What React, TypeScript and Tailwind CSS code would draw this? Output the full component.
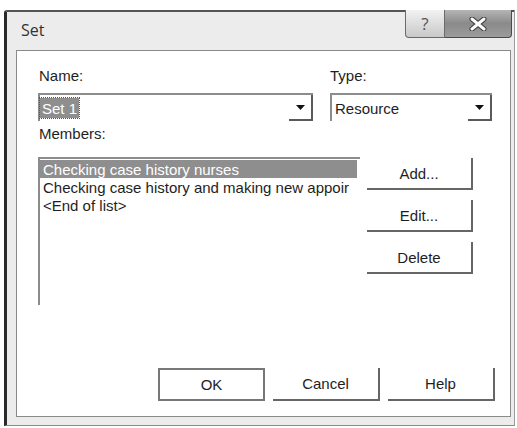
import React from "react";

function Arrow() {
  return (
    <svg width="9" height="5" viewBox="0 0 9 5" className="block">
      <path d="M0 0 H9 L4.5 5 Z" fill="#111" />
    </svg>
  );
}

function Combo({ width, children }: { width: string; children: React.ReactNode }) {
  return (
    <div className={`${width} h-[28px] flex border-t-2 border-l-2 border-[#8c8c8c] bg-white`}>
      <div className="flex-1 flex items-center">{children}</div>
      <div className="w-[24px] flex items-center justify-center border-r-2 border-b-2 border-[#5a5a5a]">
        <Arrow />
      </div>
    </div>
  );
}

function SideButton({ label }: { label: string }) {
  return (
    <div className="w-[106px] h-[32px] flex items-center justify-center border-r-2 border-b-2 border-[#666] bg-white text-[15px] text-[#1e1e1e]">
      {label}
    </div>
  );
}

export default function App() {
  return (
    <div className="w-[517px] h-[428px] bg-white overflow-hidden font-['Liberation_Sans',Arial,sans-serif]">
      <div className="ml-[4px] mt-[10px] w-[511px] h-[416px] flex flex-col bg-[#ececec] border-l-[3px] border-l-[#2a2a2a] border-t-2 border-t-[#555] border-r border-r-[#9a9a9a] border-b border-b-[#8a8a8a] rounded-tl-[3px]">
        {/* title bar */}
        <div className="h-[38px] flex items-start">
          <span className="ml-[14px] mt-[7px] text-[16px] leading-[22px] text-[#333] font-['Open_Sans',sans-serif]">
            Set
          </span>
          <div className="ml-auto mr-[2px] -mt-[2px] flex">
            <div className="w-[40px] h-[28px] flex items-center justify-center border border-t-0 border-[#6a6a6a] rounded-bl-[4px] bg-gradient-to-b from-[#f2f2f2] to-[#c9c9c9] text-[17px] leading-none text-[#555] font-['Open_Sans',sans-serif]">
              ?
            </div>
            <div className="w-[67px] h-[28px] flex items-center justify-center border border-t-0 border-l-0 border-[#4a4a4a] rounded-br-[4px] bg-gradient-to-b from-[#b5b5b5] via-[#8a8a8a] to-[#9c9c9c]">
              <svg width="20" height="14" viewBox="0 0 20 14">
                <path d="M4 2 L16 12 M16 2 L4 12" stroke="#3a3a3a" strokeWidth="5" strokeLinecap="round" />
                <path d="M4 2 L16 12 M16 2 L4 12" stroke="#fafafa" strokeWidth="3" strokeLinecap="round" />
              </svg>
            </div>
          </div>
        </div>

        {/* dialog body */}
        <div className="ml-[9px] mr-[3px] mb-[8px] flex-1 flex flex-col border border-[#8a8a8a] bg-white pl-[21px] pt-[16px] pb-[15px] pr-[15px] text-[15px] leading-[17px] text-[#1e1e1e]">
          <div className="flex">
            <span className="w-[292px] pl-[1px]">Name:</span>
            <span>Type:</span>
          </div>
          <div className="mt-[9px] flex gap-[17px]">
            <Combo width="w-[275px]">
              <span className="h-[20px] px-[2px] flex items-center bg-[#8e8e8e] text-white outline outline-1 outline-dotted outline-[#555]">
                Set 1
              </span>
            </Combo>
            <Combo width="w-[162px]">
              <span className="pl-[3px]">Resource</span>
            </Combo>
          </div>
          <div className="mt-[4px] pl-[1px]">Members:</div>
          <div className="mt-[15px] flex items-start">
            <div className="w-[322px] h-[148px] border-t-2 border-l-2 border-[#8c8c8c] pt-[1px]">
              <div className="w-[317px] h-[18px] pl-[3px] flex items-center bg-[#8e8e8e] text-white">
                Checking case history nurses
              </div>
              <div className="h-[18px] pl-[3px] flex items-center whitespace-nowrap overflow-hidden">
                Checking case history and making new appoir
              </div>
              <div className="h-[18px] pl-[3px] flex items-center">&lt;End of list&gt;</div>
            </div>
            <div className="ml-[7px] mt-[1px] flex flex-col gap-[10px]">
              <SideButton label="Add..." />
              <SideButton label="Edit..." />
              <SideButton label="Delete" />
            </div>
          </div>
          <div className="mt-auto flex justify-end gap-[8px]">
            <div className="w-[107px] h-[33px] flex items-center justify-center border-2 border-[#777] bg-white">
              OK
            </div>
            <div className="w-[107px] h-[33px] flex items-center justify-center border-r-2 border-b-2 border-[#666] bg-white">
              Cancel
            </div>
            <div className="w-[107px] h-[33px] flex items-center justify-center border-r-2 border-b-2 border-[#666] bg-white">
              Help
            </div>
          </div>
        </div>
      </div>
    </div>
  );
}
